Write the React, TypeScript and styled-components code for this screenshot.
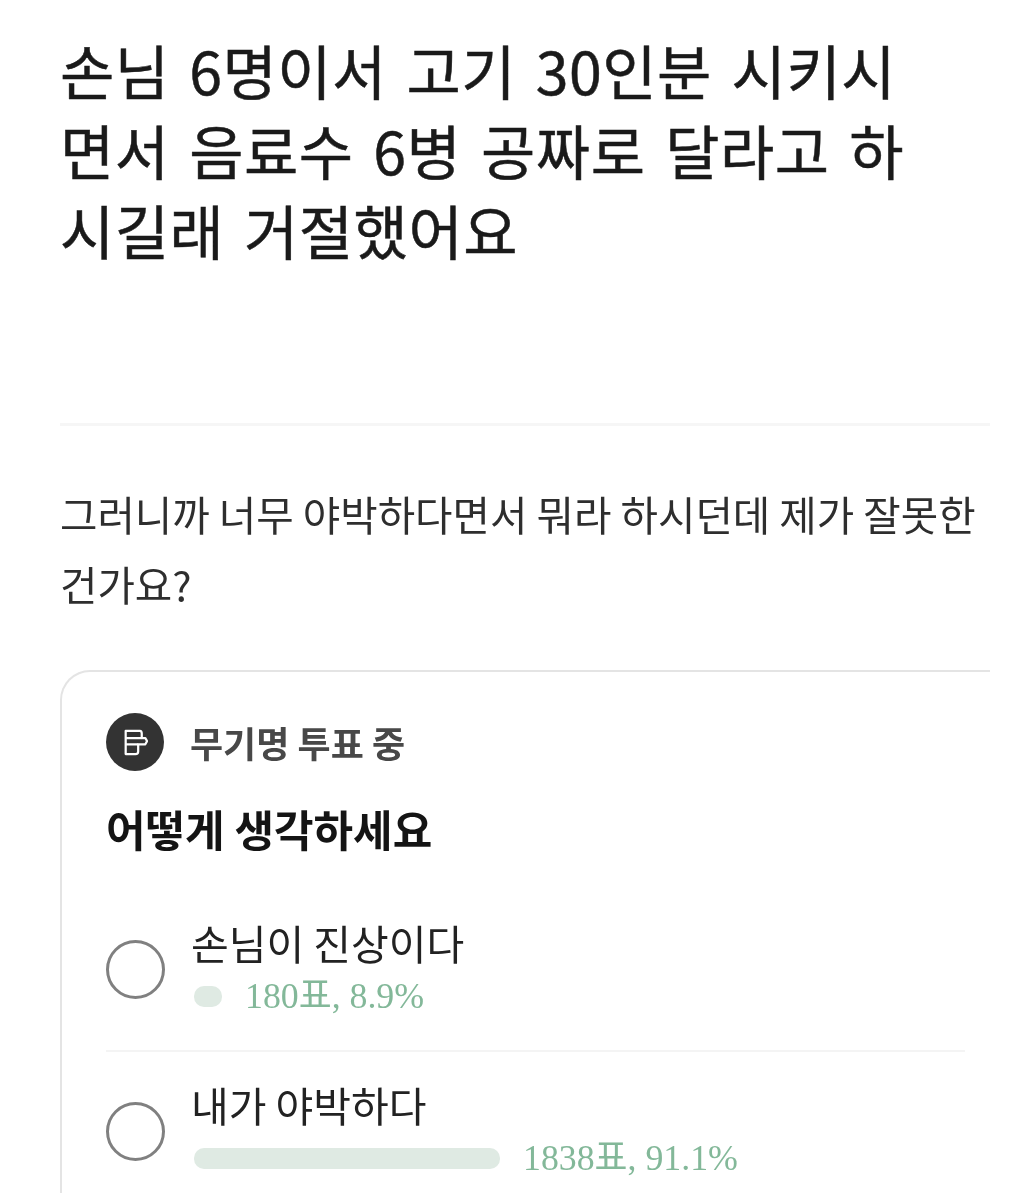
import React from "react";
import styled, { createGlobalStyle } from "styled-components";

const GlobalStyle = createGlobalStyle`
  html, body { margin: 0; padding: 0; background: #fff; }
  body {
    width: 1024px;
    height: 1193px;
    overflow: hidden;
    font-family: "Noto Sans CJK KR", "Noto Sans", sans-serif;
    color: #1d1d1d;
  }
`;

// the reference is a soft, re-compressed capture
const Page = styled.div`
  width: 930px;
  padding: 30px 0 0 60px;
  filter: blur(0.4px);
`;

const Title = styled.h1`
  margin: 0;
  font-size: 59px;
  font-weight: 400;
  line-height: 80px;
  letter-spacing: 0.5px;
  word-spacing: 6px;
  white-space: pre-line;
  color: #1a1a1a;
  -webkit-text-stroke: 0.5px #1a1a1a;
`;

const Divider = styled.div`
  margin-top: 153px;
  height: 3px;
  background: #f6f6f6;
`;

const Body = styled.p`
  margin: 53px 0 0;
  font-size: 40.7px;
  line-height: 70px;
  white-space: pre-line;
  color: #2e2e2e;
`;

const Card = styled.section`
  margin-top: 51px;
  padding: 41px 25px 60px 44px;
  border: 2px solid #e4e4e4;
  border-right: none;
  border-bottom: none;
  border-top-left-radius: 30px;
`;

const CardHeader = styled.div`
  display: flex;
  align-items: center;
  gap: 26px;
`;

const Badge = styled.div`
  width: 58px;
  height: 58px;
  border-radius: 50%;
  background: #333;
  display: flex;
  align-items: center;
  justify-content: center;
`;

const HeaderLabel = styled.span`
  font-size: 36px;
  font-weight: 700;
  color: #484848;
`;

const Question = styled.h2`
  margin: 26px 0 0;
  font-size: 43px;
  font-weight: 700;
  line-height: 62px;
  color: #141414;
`;

const Option = styled.div<{ $first?: boolean }>`
  display: flex;
  align-items: center;
  gap: 26px;
  padding: ${(p) => (p.$first ? "55px 0 32px" : "24px 0 0")};
  border-bottom: ${(p) => (p.$first ? "2px solid #f4f4f4" : "none")};
`;

const Radio = styled.div`
  width: 59px;
  height: 59px;
  box-sizing: border-box;
  flex: none;
  border: 3px solid #808080;
  border-radius: 50%;
  margin-top: 6px;
`;

const OptionText = styled.div`
  font-size: 41px;
  line-height: 56px;
  color: #222;
`;

const ResultRow = styled.div`
  display: flex;
  align-items: center;
  gap: 23px;
  margin: 4px 0 0 3px;
`;

const Bar = styled.div`
  height: 21px;
  border-radius: 10px;
  background: #dfeae3;
`;

const Votes = styled.span`
  font-family: "Liberation Serif", "Noto Sans CJK KR", serif;
  font-size: 35.8px;
  line-height: 44px;
  color: #83b899;
`;

const Logo = () => (
  <svg width="25" height="27" viewBox="0 0 28 30" fill="none" stroke="#fff" strokeWidth="2.5" strokeLinejoin="round">
    <path d="M3 2H19Q21 2 21 5V10H25L27 13.5L25 17H17V25Q17 28 14 28H3Z" />
    <path d="M3 10H21M3 17H17" />
  </svg>
);

export default function App() {
  const options = [
    { label: "손님이 진상이다", votes: "180표, 8.9%", width: 28 },
    { label: "내가 야박하다", votes: "1838표, 91.1%", width: 306 },
  ];

  return (
    <Page>
      <GlobalStyle />
      <Title>{"손님 6명이서 고기 30인분 시키시\n면서 음료수 6병 공짜로 달라고 하\n시길래 거절했어요"}</Title>
      <Divider />
      <Body>{"그러니까 너무 야박하다면서 뭐라 하시던데 제가 잘못한\n건가요?"}</Body>
      <Card>
        <CardHeader>
          <Badge><Logo /></Badge>
          <HeaderLabel>무기명 투표 중</HeaderLabel>
        </CardHeader>
        <Question>어떻게 생각하세요</Question>
        {options.map((o, i) => (
          <Option key={o.label} $first={i === 0}>
            <Radio />
            <div>
              <OptionText>{o.label}</OptionText>
              <ResultRow>
                <Bar style={{ width: o.width }} />
                <Votes>{o.votes}</Votes>
              </ResultRow>
            </div>
          </Option>
        ))}
      </Card>
    </Page>
  );
}
